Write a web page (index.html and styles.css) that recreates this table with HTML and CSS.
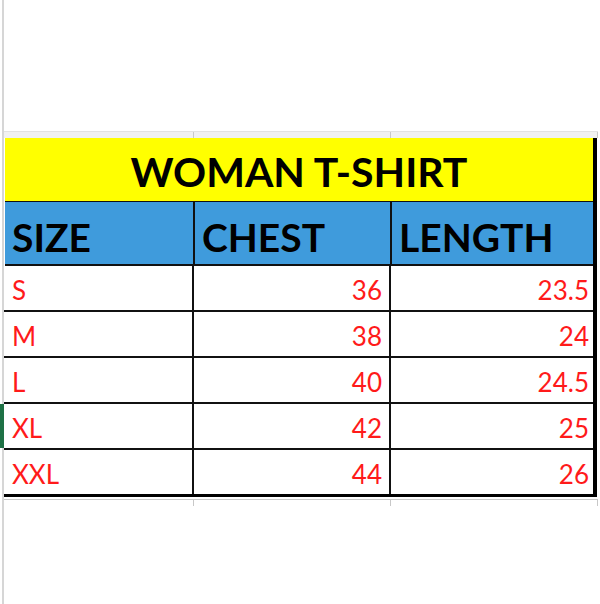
FILE: index.html
```html
<!DOCTYPE html>
<html>
<head>
<meta charset="utf-8">
<link rel="stylesheet" href="styles.css">
</head>
<body>
<div class="page">
  <div class="grid gridline-top">
    <span></span><span></span><span></span>
  </div>
  <div class="sheet">
    <div class="title">WOMAN T-SHIRT</div>
    <div class="grid head">
      <div class="cell">SIZE</div>
      <div class="cell">CHEST</div>
      <div class="cell">LENGTH</div>
    </div>
    <div class="grid row">
      <div class="cell size">S</div>
      <div class="cell num">36</div>
      <div class="cell num">23.5</div>
    </div>
    <div class="grid row">
      <div class="cell size">M</div>
      <div class="cell num">38</div>
      <div class="cell num">24</div>
    </div>
    <div class="grid row">
      <div class="cell size">L</div>
      <div class="cell num">40</div>
      <div class="cell num">24.5</div>
    </div>
    <div class="grid row selected">
      <div class="cell size">XL</div>
      <div class="cell num">42</div>
      <div class="cell num">25</div>
    </div>
    <div class="grid row last">
      <div class="cell size">XXL</div>
      <div class="cell num">44</div>
      <div class="cell num">26</div>
    </div>
  </div>
  <div class="grid gridline-bottom">
    <span></span><span></span><span></span>
  </div>
</div>
</body>
</html>
```

FILE: styles.css
```css
html, body {
  margin: 0;
  padding: 0;
  background: #ffffff;
}

body {
  font-family: "Lato", "Open Sans", sans-serif;
}

.page {
  height: 604px;
  box-sizing: border-box;
  margin-left: 2px;
  border-left: 2px solid #d6d6d6;
  padding-top: 131px;
  width: 596px;
}

.grid {
  display: grid;
  grid-template-columns: 190px 197px 1fr;
}

.gridline-top {
  height: 7px;
  box-sizing: border-box;
  background: #f1f1f1;
  border-top: 1px solid #e2e2e2;
  width: 594px;
}

.gridline-top span,
.gridline-bottom span {
  border-right: 1px solid #c8c8c8;
}

.gridline-bottom {
  margin-top: 2px;
  height: 7px;
  box-sizing: border-box;
  border-top: 1px solid #c8c8c8;
  width: 594px;
}

.sheet {
  width: 593px;
  box-sizing: border-box;
  border-right: 4px solid #000;
  border-bottom: 3px solid #000;
}

.title {
  height: 64px;
  box-sizing: border-box;
  background: #ffff00;
  border-bottom: 1px solid #111;
  margin-left: 1px;
  display: flex;
  align-items: center;
  justify-content: center;
  font-weight: 700;
  font-size: 41px;
  color: #000;
  padding-top: 3px;
}

.head {
  height: 64px;
  box-sizing: border-box;
  background: #3f9bdc;
  border-bottom: 2px solid #111;
  margin-left: 1px;
}

.head .cell {
  font-weight: 700;
  font-size: 39px;
  color: #000;
  padding-left: 7px;
  display: flex;
  align-items: flex-end;
  padding-bottom: 7px;
  line-height: 1;
}

.cell {
  border-right: 2px solid #111;
  box-sizing: border-box;
}

.cell:last-child {
  border-right: none;
}

.row {
  height: 46px;
  box-sizing: border-box;
  border-bottom: 2px solid #111;
}

.row.last {
  height: 44px;
  border-bottom: none;
}

.row .cell {
  font-size: 26px;
  color: #ff1a1a;
  line-height: 1;
  display: flex;
  align-items: flex-end;
  padding-bottom: 7px;
}

.row .size {
  padding-left: 8px;
}

.row .num {
  justify-content: flex-end;
  padding-right: 7px;
}

.row .num:last-child {
  padding-right: 4px;
}

.row.selected .size {
  box-shadow: -6px 0 0 0 #1e7145;
}
```
